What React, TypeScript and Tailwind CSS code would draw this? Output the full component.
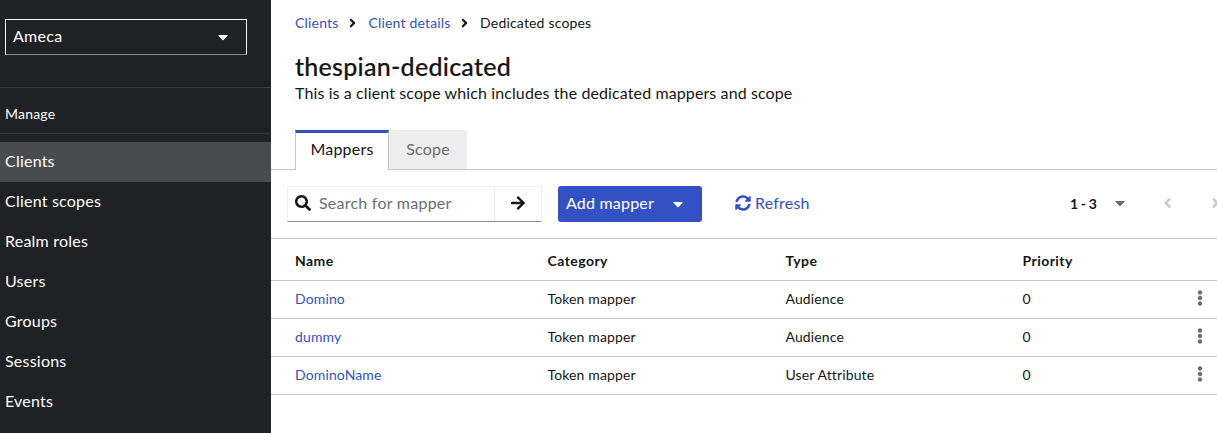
import type { ReactNode } from "react";
import {
  FaAngleLeft,
  FaAngleRight,
  FaArrowRight,
  FaCaretDown,
  FaEllipsisV,
  FaSearch,
  FaSyncAlt,
} from "react-icons/fa";

const navItems = ["Clients", "Client scopes", "Realm roles", "Users", "Groups", "Sessions", "Events"];

const mappers = [
  { name: "Domino", category: "Token mapper", type: "Audience", priority: 0 },
  { name: "dummy", category: "Token mapper", type: "Audience", priority: 0 },
  { name: "DominoName", category: "Token mapper", type: "User Attribute", priority: 0 },
];

function Sidebar() {
  return (
    <aside className="w-[271px] shrink-0 bg-[#202125] text-white">
      <div className="h-[88px] border-b border-[#3a3b3f] pt-[19px] pl-[5px]">
        <button className="flex h-9 w-[242px] items-center justify-between border border-[#f5f5f5] border-b-[#8a8d90] pr-[18px] pl-[7px]">
          <span className="pb-0.5 text-base leading-6 tracking-[0.3px]">Ameca</span>
          <FaCaretDown className="h-4 w-[10px]" />
        </button>
      </div>
      <h2 className="flex h-[46px] items-center border-b border-[#3a3b3f] pt-[7px] pl-[5px] text-sm tracking-[0.2px]">
        Manage
      </h2>
      <nav className="flex flex-col pt-2">
        {navItems.map((item, i) => (
          <a
            key={item}
            className={`flex h-10 items-center pb-0.5 pl-[5px] text-base tracking-[0.22px] ${i === 0 ? "bg-[#4a4b4e]" : ""}`}
          >
            {item}
          </a>
        ))}
      </nav>
    </aside>
  );
}

function Row({ children, className }: { children: ReactNode; className: string }) {
  return (
    <div className={`grid grid-cols-[252.5px_238px_237px_1fr] items-center border-b border-[#c7c7c7] pl-6 ${className}`}>
      {children}
    </div>
  );
}

export default function App() {
  return (
    <div className="flex h-[433px] w-[1217px] overflow-hidden bg-white font-['Lato','Liberation_Sans',sans-serif] text-[#151515]">
      <Sidebar />
      <main className="min-w-0 flex-1">
        <div className="flex h-[46px] items-center pl-6 text-sm tracking-[0.18px]">
          <a className="text-[#3451c4]">Clients</a>
          <FaAngleRight className="mr-[10px] ml-[9px] h-[14px] w-[11px]" />
          <a className="text-[#3451c4]">Client details</a>
          <FaAngleRight className="mr-[10px] ml-[8.5px] h-[14px] w-[11px]" />
          <span>Dedicated scopes</span>
        </div>
        <h1 className="pt-1 pl-6 text-[25px] leading-8 font-medium tracking-[0.28px] [-webkit-text-stroke:0.2px_#151515]">
          thespian-dedicated
        </h1>
        <p className="pl-6 text-base leading-[22px] tracking-[0.11px]">
          This is a client scope which includes the dedicated mappers and scope
        </p>
        <div className="mt-[26px] flex h-10 text-base tracking-[0.2px]">
          <div className="w-6 border-b border-[#c7c7c7]" />
          <div className="flex w-[94px] items-center justify-center border-x border-t-3 border-x-[#c7c7c7] border-t-[#3451c4] pb-[5px]">
            Mappers
          </div>
          <div className="flex w-[78px] items-center justify-center border-b border-[#c7c7c7] bg-[#ededed] pb-px text-[#6a6e73]">
            Scope
          </div>
          <div className="flex-1 border-b border-[#c7c7c7]" />
        </div>
        <div className="flex h-[69px] items-center border-b border-[#c7c7c7] pl-4">
          <div className="flex h-9 w-[255px] border border-[#ededed] border-b-[#8a8d90]">
            <div className="flex w-[207px] items-center border-r border-[#ededed] pl-[7px]">
              <FaSearch className="mb-0.5 size-4" />
              <span className="ml-2 pb-0.5 text-base tracking-[0.24px] text-[#6a6e73]">Search for mapper</span>
            </div>
            <div className="flex flex-1 items-center justify-center pb-0.5">
              <FaArrowRight className="size-4" />
            </div>
          </div>
          <button className="ml-4 flex h-9 w-[144px] items-center justify-between rounded-[3px] bg-[#3451c4] pr-[19px] pl-2 text-base tracking-[0.2px] text-white">
            <span className="pb-0.5">Add mapper</span>
            <FaCaretDown className="mb-px h-4 w-[10px]" />
          </button>
          <button className="ml-[33px] flex items-center text-base tracking-[0.2px] text-[#3451c4]">
            <FaSyncAlt className="mb-0.5 size-4" />
            <span className="ml-1 pb-0.5">Refresh</span>
          </button>
          <div className="ml-auto flex shrink-0 items-center">
            <span className="w-[45px] text-sm font-bold tracking-[-0.35px]">1 - 3</span>
            <FaCaretDown className="mb-0.5 h-4 w-[10px] text-[#6a6e73]" />
            <FaAngleLeft className="mb-0.5 ml-[37px] h-4 w-[11px] text-[#c8c8c8]" />
            <FaAngleRight className="-mr-1 mb-0.5 ml-[37px] h-4 w-[11px] text-[#c8c8c8]" />
          </div>
        </div>
        <Row className="h-[42px] pt-[3px] text-sm font-bold tracking-[0.45px]">
          <span>Name</span>
          <span>Category</span>
          <span>Type</span>
          <span>Priority</span>
        </Row>
        {mappers.map((m) => (
          <Row key={m.name} className="h-[38px] pb-0.5 text-sm tracking-[0.13px]">
            <a className="text-[#3451c4]">{m.name}</a>
            <span>{m.category}</span>
            <span>{m.type}</span>
            <span className="flex items-center justify-between pr-[9px]">
              {m.priority}
              <FaEllipsisV className="mb-0.5 size-4 text-[#6a6e73]" />
            </span>
          </Row>
        ))}
      </main>
    </div>
  );
}
